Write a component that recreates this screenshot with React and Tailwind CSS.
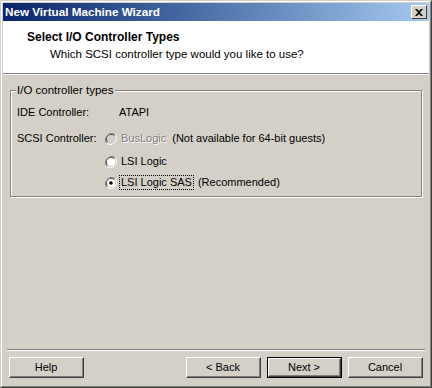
import React from 'react';

const font = { fontFamily: '"Liberation Sans", Arial, sans-serif' };

const Radio = ({ checked, disabled }) => (
  <svg width="12" height="12" viewBox="0 0 12 12" className="shrink-0">
    <path d="M10.2 1.8 A6 6 0 0 0 1.8 10.2" fill="none" stroke="#808080" strokeWidth="1" />
    <path d="M9.5 2.5 A5 5 0 0 0 2.5 9.5" fill="none" stroke="#404040" strokeWidth="1" />
    <path d="M1.8 10.2 A6 6 0 0 0 10.2 1.8" fill="none" stroke="#ffffff" strokeWidth="1" />
    <path d="M2.5 9.5 A5 5 0 0 0 9.5 2.5" fill="none" stroke="#d4d0c8" strokeWidth="1" />
    <circle cx="6" cy="6" r="4" fill={disabled ? '#d4d0c8' : '#ffffff'} />
    {checked && <circle cx="6" cy="6" r="1.8" fill="#000" />}
  </svg>
);

const Button = ({ children, isDefault }) => (
  <div className={`w-[75px] h-[21px] ${isDefault ? 'border border-black' : ''}`}>
    <div className="h-full border-t border-l border-white border-r border-b border-r-[#404040] border-b-[#404040] bg-[#d4d0c8]">
      <div className="h-full flex items-center justify-center border-r border-b border-[#808080] text-[11px] text-black">
        {children}
      </div>
    </div>
  </div>
);

export default function App() {
  return (
    <div style={font} className="w-[432px] h-[388px] border border-[#d4d0c8] border-r-[#404040] border-b-[#404040]">
      <div className="h-full border border-white border-r-[#808080] border-b-[#808080] bg-[#d4d0c8] p-px flex flex-col">
        {/* title bar */}
        <div className="h-[18px] bg-gradient-to-r from-[#0a246a] to-[#a6caf0] flex items-center justify-between pl-[2px] pr-[2px]">
          <span className="text-white font-bold text-[11.7px]">New Virtual Machine Wizard</span>
          <div className="w-[16px] h-[14px] border border-white border-r-[#404040] border-b-[#404040] bg-[#d4d0c8] flex items-center justify-center">
            <svg width="8" height="7" viewBox="0 0 8 7">
              <path d="M0 0 L2 0 L4 2 L6 0 L8 0 L5 3.5 L8 7 L6 7 L4 5 L2 7 L0 7 L3 3.5 Z" fill="#000" />
            </svg>
          </div>
        </div>

        {/* header */}
        <div className="h-[53px] bg-white border-b border-[#808080] pl-[24px] pt-[10px]">
          <div className="font-bold text-[12px] text-black leading-[13px]">Select I/O Controller Types</div>
          <div className="text-[11.5px] text-black pl-[23px] pt-[4px] leading-[13px]">Which SCSI controller type would you like to use?</div>
        </div>
        <div className="h-px bg-white" />

        {/* body */}
        <div className="flex-1 px-[7px] pt-[15px]">
          <div className="relative border border-[#808080] shadow-[inset_1px_1px_0_#fff,1px_1px_0_#fff] h-[107px] pt-[15px] pl-[6px] text-[11px] text-black">
            <span className="absolute -top-[7px] left-[5px] bg-[#d4d0c8] px-[1px] leading-[13px] text-[11.5px]">I/O controller types</span>
            <div className="flex leading-[13px]">
              <span className="w-[102px]">IDE Controller:</span>
              <span>ATAPI</span>
            </div>
            <div className="flex mt-[13px] leading-[13px]">
              <span className="w-[88px]">SCSI Controller:</span>
              <div className="flex flex-col">
                <div className="flex items-center">
                  <Radio disabled />
                  <span className="ml-[4px] text-[#808080] [text-shadow:1px_1px_0_#fff]">BusLogic</span>
                  <span className="ml-[6px]">(Not available for 64-bit guests)</span>
                </div>
                <div className="flex items-center mt-[10px]">
                  <Radio />
                  <span className="ml-[4px]">LSI Logic</span>
                </div>
                <div className="flex items-center mt-[8px]">
                  <Radio checked />
                  <span className="ml-[3px] px-px outline outline-1 outline-dotted outline-black">LSI Logic SAS</span>
                  <span className="ml-[5px]">(Recommended)</span>
                </div>
              </div>
            </div>
          </div>
        </div>

        {/* footer */}
        <div className="h-px bg-[#808080] mx-[4px]" />
        <div className="h-px bg-white mx-[4px]" />
        <div className="flex items-center px-[6px] pt-[6px] pb-[7px]">
          <Button>Help</Button>
          <div className="flex-1" />
          <div className="flex gap-[6px]">
            <Button>&lt; Back</Button>
            <Button isDefault>Next &gt;</Button>
            <Button>Cancel</Button>
          </div>
        </div>
      </div>
    </div>
  );
}
